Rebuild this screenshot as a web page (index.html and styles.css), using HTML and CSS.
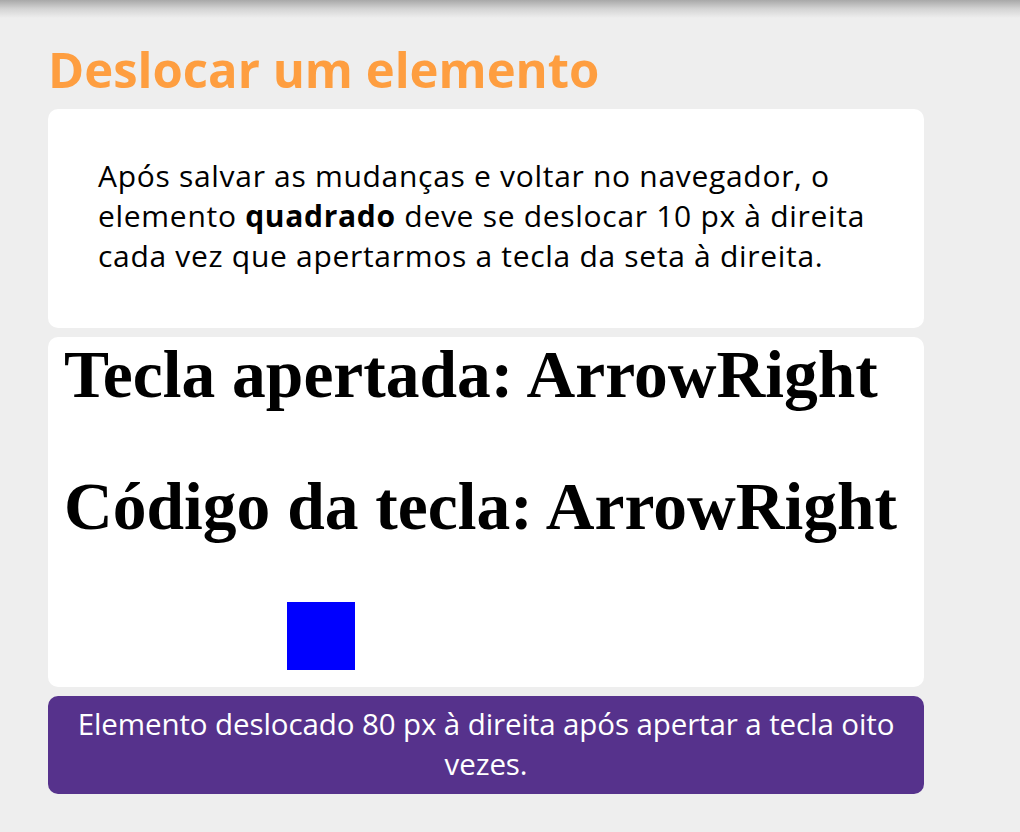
FILE: index.html
```html
<!DOCTYPE html>
<html lang="pt">
<head>
<meta charset="utf-8">
<link rel="stylesheet" href="styles.css">
</head>
<body>
<div class="topshadow"></div>
<main class="page">
  <h2 class="title">Deslocar um elemento</h2>
  <section class="card intro">
    <p>Após salvar as mudanças e voltar no navegador, o elemento <strong>quadrado</strong> deve se deslocar 10 px à direita cada vez que apertarmos a tecla da seta à direita.</p>
  </section>
  <section class="card demo">
    <h1 class="key">Tecla apertada: ArrowRight</h1>
    <h1 class="key second">Código da tecla: ArrowRight</h1>
    <div class="square"></div>
  </section>
  <section class="note">
    <p>Elemento deslocado 80 px à direita após apertar a tecla oito vezes.</p>
  </section>
</main>
</body>
</html>
```

FILE: styles.css
```css
html, body {
  margin: 0;
  padding: 0;
  background: #eeeeee;
}
body {
  font-family: "Open Sans", "Noto Sans", sans-serif;
  width: 1020px;
  height: 832px;
  overflow: hidden;
}
.topshadow {
  height: 18px;
  background: linear-gradient(to bottom, #a8a8a8 0%, #d4d4d4 50%, #eeeeee 100%);
}
.page {
  width: 876px;
  margin-left: 48px;
}
.title {
  margin: 19px 0 0 0;
  font-size: 49px;
  line-height: 64px;
  font-weight: 700;
  color: #fe9e40;
  height: 72px;
}
.card {
  background: #ffffff;
  border-radius: 10px;
}
.intro {
  height: 219px;
  box-sizing: border-box;
  padding: 47px 50px 0 50px;
}
.intro p {
  margin: 0;
  font-size: 30px;
  line-height: 40px;
  letter-spacing: 0.7px;
  color: #000;
}
.intro strong {
  font-weight: 700;
}
.demo {
  margin-top: 9px;
  height: 350px;
  box-sizing: border-box;
  padding: 0 16px 0 16px;
}
.key {
  font-family: "Liberation Serif", "Times New Roman", serif;
  font-weight: 700;
  font-size: 67.5px;
  line-height: 76px;
  margin: 0;
  color: #000;
}
.key.second {
  margin-top: 56px;
}
.square {
  width: 68px;
  height: 68px;
  background: #0000ff;
  margin-top: 57px;
  margin-left: 223px;
}
.note {
  margin-top: 9px;
  height: 98px;
  background: #56328c;
  border-radius: 10px;
  box-sizing: border-box;
  padding: 8px 16px 0 16px;
  text-align: center;
}
.note p {
  margin: 0;
  color: #ffffff;
  font-size: 29.5px;
  line-height: 40px;
  letter-spacing: -0.1px;
}
```
